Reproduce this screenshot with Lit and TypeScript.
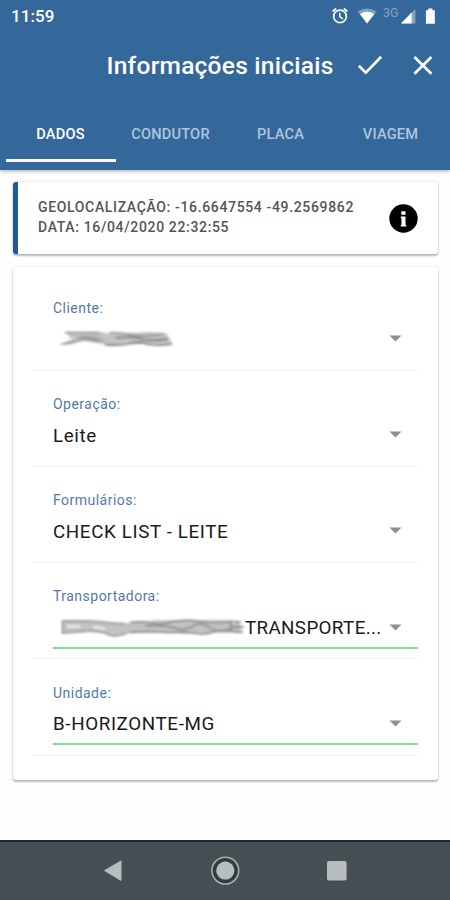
import { LitElement, html, css, nothing } from "lit";
import { customElement } from "lit/decorators.js";

interface Field {
  label: string;
  value: string;
  touched?: boolean;
  hidden?: "short" | "long";
}

const FIELDS: Field[] = [
  { label: "Cliente:", value: "", hidden: "short" },
  { label: "Operação:", value: "Leite" },
  { label: "Formulários:", value: "CHECK LIST - LEITE" },
  { label: "Transportadora:", value: "TRANSPORTE...", hidden: "long", touched: true },
  { label: "Unidade:", value: "B-HORIZONTE-MG", touched: true },
];

const TABS = ["DADOS", "CONDUTOR", "PLACA", "VIAGEM"];

@customElement("status-bar")
export class StatusBar extends LitElement {
  static styles = css`
    :host { display: flex; height: 34px; justify-content: space-between; color: #fff; }
    .time { padding: 6px 0 0 11px; font-size: 17px; line-height: 20px; font-weight: 500; letter-spacing: 0.1px; }
    svg { display: block; }
  `;
  render() {
    return html`
      <div class="time">11:59</div>
      <svg width="130" height="34" viewBox="320 0 130 34">
        <g fill="none" stroke="#f4f8fc" stroke-width="1.7">
          <circle cx="340" cy="16.4" r="6.3" />
          <path d="M332.6 11.4l3.6-3M347.4 11.4l-3.6-3" stroke-width="1.9" />
          <path d="M339.8 12.8v3.9l3 2.2" stroke-width="1.5" />
        </g>
        <path d="M357.6 11.6Q367 5.2 376.6 11.6L367 23.6z" fill="#fff" opacity=".38" />
        <path d="M360 14Q367 9.4 374.2 14L367 23.4z" fill="#fff" />
        <text x="383" y="17.4" font-size="12.5" fill="#7fa3c8">3G</text>
        <path d="M415.4 9v14.6H401z" fill="#fff" opacity=".4" />
        <path d="M411.6 12.6v11H401z" fill="#fff" />
        <path d="M428.2 8.4h4.2v1.8h2.4v13.6h-8.9V10.2h2.3z" fill="#fff" />
      </svg>
    `;
  }
}

@customElement("select-field")
export class SelectField extends LitElement {
  static properties = { field: { attribute: false } };
  declare field: Field;
  static styles = css`
    :host { display: block; height: 96.2px; box-sizing: border-box; padding-left: 20px; border-bottom: 1.5px solid #f0f0f0; }
    .label { padding-top: 24.3px; font-size: 14px; line-height: 18px; color: #5578a8; letter-spacing: 0.48px; }
    .line { display: flex; align-items: center; height: 24px; margin-top: 9.6px; padding-right: 16px; }
    .value { flex: 1; font-size: 18.8px; line-height: 24px; padding-top: 2px; color: #1a1a1a; white-space: nowrap; display: flex; align-items: center; letter-spacing: 0.62px; }
    .value.cut { letter-spacing: 0.36px; }
    .arrow { width: 13px; height: 7px; display: block; }
    .smudge { display: block; height: 20px; overflow: visible; flex: none; }
    .green { height: 2px; background: #85dd98; margin-top: 7.8px; margin-right: 0.5px; }
  `;
  smudge(kind?: "short" | "long") {
    if (kind === "short")
      return html`<svg class="smudge" width="125" height="20" viewBox="0 0 125 20">
        <defs><filter id="s" x="-10%" y="-30%" width="120%" height="160%"><feGaussianBlur stdDeviation="1.4 0.8" /></filter></defs>
        <g filter="url(#s)" fill="none">
          <path d="M12 3H48L56 5 70 4 99 3 113 4 119 14 75 15.5 54 16 45 14 30 12 8 15 19 10z" fill="#c2c2c2" />
          <path d="M12 3.5H46M8 15Q18 15 26 11.5T46 13M56 4Q68 3 78 6T110 5" stroke="#8c8c8c" stroke-width="1.7" />
          <path d="M52 15.5Q68 17 77 14.5T92 14.5 119 15M63 9Q80 7 88 10T115 10" stroke="#808080" stroke-width="1.8" />
          <path d="M25 8.5Q37 6 50 12" stroke="#a0a0a0" stroke-width="2.6" />
        </g>
      </svg>`;
    if (kind === "long")
      return html`<svg class="smudge" width="192" height="20" viewBox="0 0 192 20">
        <defs><filter id="s" x="-10%" y="-30%" width="120%" height="160%"><feGaussianBlur stdDeviation="1.3 0.8" /></filter></defs>
        <g filter="url(#s)" fill="none">
          <path d="M9 2H32L58 4 77 5 105 2H182L188 7V13L178 15 147 14.5 130 16 110 14 74 15 60 17 37 14 9 15z" fill="#c2c2c2" />
          <path d="M9 3H23Q44 3 58 5T70 5M9.5 3V15Q24 14 36 13T54 16 74 15" stroke="#a0a0a0" stroke-width="1.9" />
          <path d="M77 4.5Q87 3 98 5T119 4 147 3.5 179 3.5" stroke="#8a8a8a" stroke-width="1.7" />
          <path d="M76 14.5Q95 13 107 14T122 14 139 15 160 14 183 14" stroke="#858585" stroke-width="1.7" />
          <path d="M92 8Q111 7 122 10T140 8 158 10 180 8M178 4V14" stroke="#949494" stroke-width="1.9" />
          <path d="M14 8.5H27M40 9L52 11" stroke="#e6e6e6" stroke-width="3" />
          <path d="M180 9H191M182 14H190M182 4H188" stroke="#777" stroke-width="1.6" />
        </g>
      </svg>`;
    return nothing;
  }
  render() {
    const f = this.field;
    return html`
      <div class="label">${f.label}</div>
      <div class="line">
        <div class="value ${f.hidden ? "cut" : ""}">${this.smudge(f.hidden)}${f.value}</div>
        <svg class="arrow" viewBox="0 0 13 7"><path d="M.5 .5h12L6.5 6.5z" fill="#8e8e8e" /></svg>
      </div>
      ${f.touched ? html`<div class="green"></div>` : nothing}
    `;
  }
}

@customElement("app-root")
export class AppRoot extends LitElement {
  static styles = css`
    :host { display: flex; flex-direction: column; width: 450px; height: 900px; overflow: hidden; background: #fefefe; font-family: Roboto, "Liberation Sans", sans-serif; }
    header { height: 170px; flex: none; background: #34679a; box-shadow: 0 1px 4px rgba(0, 0, 0, 0.35); }
    .toolbar { display: flex; height: 64px; align-items: center; color: #fff; padding-left: 106.5px; }
    h1 { margin: 0; font-size: 24.5px; font-weight: 500; line-height: 30px; width: 233.5px; flex: none; white-space: nowrap; letter-spacing: 0.25px; }
    .toolbar svg { display: block; flex: none; }
    .tabs { display: flex; padding-left: 5.5px; margin-top: 11px; }
    .tab { width: 110px; flex: none; box-sizing: border-box; height: 53px; padding-top: 15px; text-align: center; font-size: 14.6px; font-weight: 500; line-height: 20px; letter-spacing: 0.2px; color: #aec5df; border-bottom: 3.4px solid transparent; }
    .tab.on { color: #fff; border-bottom-color: #f4faff; }
    main { flex: 1; padding: 12px 12px 0 13px; }
    .card { background: #fff; border-radius: 3px; box-shadow: 0 2px 2px rgba(0, 0, 0, 0.25), 0 0 3px rgba(0, 0, 0, 0.14); }
    .info { display: flex; height: 72px; box-sizing: border-box; border-left: 5px solid #1f5b92; padding: 0 20px 0 20px; align-items: center; justify-content: space-between; }
    .meta { font-size: 14px; font-weight: 500; line-height: 20px; color: #555; letter-spacing: 0.65px; white-space: nowrap; padding-bottom: 3px; }
    .form { margin-top: 13px; height: 513px; box-sizing: border-box; padding: 7.6px 20px 0 20px; }
    nav { height: 60px; flex: none; box-sizing: border-box; background: #464f54; border-top: 2px solid #172b35; }
    nav svg { display: block; }
  `;
  render() {
    return html`
      <header>
        <status-bar></status-bar>
        <div class="toolbar">
          <h1>Informações iniciais</h1>
          <svg width="110" height="40" viewBox="340 46 110 40" fill="none" stroke="#fff" stroke-width="2.7">
            <path d="M358.8 65.8l7 6.8 15.4-15.8M414.4 57l17 16.8M431.4 57l-17 16.8" />
          </svg>
        </div>
        <div class="tabs">
          ${TABS.map((t, i) => html`<div class="tab ${i === 0 ? "on" : ""}">${t}</div>`)}
        </div>
      </header>
      <main>
        <section class="card info">
          <div class="meta">
            <div>GEOLOCALIZAÇÃO: -16.6647554 -49.2569862</div>
            <div>DATA: 16/04/2020 22:32:55</div>
          </div>
          <svg width="29" height="29" viewBox="0 0 29 29">
            <circle cx="14.5" cy="14.5" r="14.2" fill="#000" />
            <path d="M12.3 7.2h4.2v3.5h-4.2zM11.8 12.4h4.7v8.4h.7v1.8h-5.4v-1.8h.7v-6.6h-.7z" fill="#fff" />
          </svg>
        </section>
        <section class="card form">
          ${FIELDS.map((f) => html`<select-field .field=${f}></select-field>`)}
        </section>
      </main>
      <nav>
        <svg width="450" height="58" viewBox="0 842 450 58">
          <path d="M104.6 870.6L121 861v19.4z" fill="#b8bdbf" stroke="#b8bdbf" stroke-linejoin="round" />
          <circle cx="225.3" cy="870.6" r="11.6" fill="none" stroke="#303a3f" stroke-width="4" />
          <circle cx="225.3" cy="870.6" r="13.4" fill="none" stroke="#a9afb1" stroke-width="1.6" />
          <circle cx="225.3" cy="870.6" r="9" fill="#b8bdbf" />
          <rect x="327" y="861" width="19.6" height="19.6" rx="2" fill="#b8bdbf" />
        </svg>
      </nav>
    `;
  }
}
